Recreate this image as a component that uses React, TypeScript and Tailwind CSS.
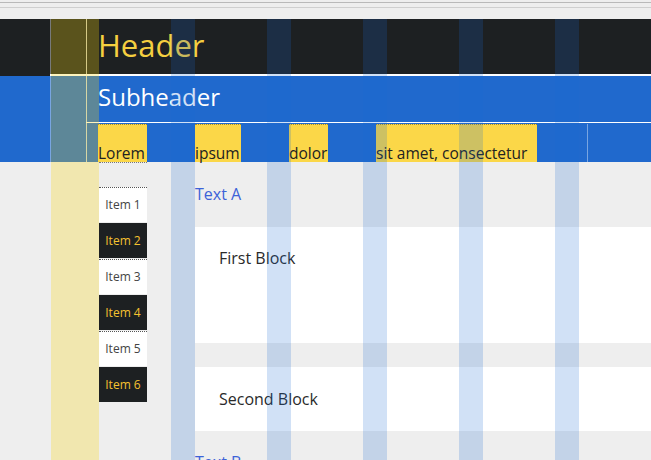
const items = ['Item 1', 'Item 2', 'Item 3', 'Item 4', 'Item 5', 'Item 6'];

const navLinks = [
  { label: 'Lorem', w: 'w-[49px]' },
  { label: 'ipsum', w: 'w-[46px]' },
  { label: 'dolor', w: 'w-[39px]' },
  { label: 'sit amet, consectetur', w: 'w-[161px]' },
];

const stripes = ['left-[171px]', 'left-[267px]', 'left-[363px]', 'left-[459px]', 'left-[555px]'];

export default function App() {
  return (
    <div className="relative w-[651px] h-[460px] overflow-hidden bg-[#eeeeee] font-['Open_Sans',sans-serif]">
      {/* browser chrome strip */}
      <div className="h-[19px]">
        <div className="pt-[2px]">
          <div className="border-t border-[#b9b9b9]" />
          <div className="mt-[4px] border-t border-[#cfcfcf]" />
        </div>
      </div>

      {/* Header */}
      <header className="h-[55px] bg-[#1d2022] pl-[98px] pt-[11px]">
        <h1 className="text-[31px] leading-[30px] font-normal text-[#f5cf40]">Header</h1>
      </header>
      <div className="flex h-[2px]">
        <div className="w-[50px] bg-[#1d2022]" />
        <div className="flex-1 bg-white" />
      </div>

      {/* Subheader */}
      <div className="h-[46px] bg-[#2069cd] pl-[98px] pt-[8px]">
        <h2 className="text-[24px] leading-[25px] font-normal text-white">Subheader</h2>
      </div>
      <div className="flex h-[2px] bg-[#2069cd]">
        <div className="w-[86px]" />
        <div className="flex-1 border-t border-white" />
      </div>

      {/* Nav */}
      <nav className="flex h-[38px] gap-[48px] bg-[#2069cd] pl-[98px]">
        {navLinks.map((l) => (
          <a
            key={l.label}
            className={`${l.w} flex items-end whitespace-nowrap border-t border-dotted border-[#a08a30] bg-[#fbd748] text-[15.5px] leading-[18px] text-[#222]`}
          >
            {l.label}
          </a>
        ))}
      </nav>

      {/* Content */}
      <div className="flex">
        <div className="w-[99px] shrink-0" />
        <aside className="w-[48px] shrink-0 border-t border-dotted border-[#777] pt-[24px]">
          {items.map((item, i) => (
            <div
              key={item}
              className={
                i % 2 === 0
                  ? 'mb-px flex h-[35px] items-center justify-center border-t border-dotted border-[#555] bg-white text-[12px] text-[#444]'
                  : 'mb-px flex h-[35px] items-center justify-center bg-[#1d2022] text-[12px] text-[#f5c230]'
              }
            >
              {item}
            </div>
          ))}
        </aside>
        <div className="w-[48px] shrink-0" />
        <main className="flex-1">
          <div className="h-[65px] pt-[20px] text-[16px] leading-[24px] text-[#3d62d8]">Text A</div>
          <div className="h-[116px] bg-white px-6 pt-[19px] text-[16px] leading-[24px] text-[#2a2a2a]">First Block</div>
          <div className="h-[24px]" />
          <div className="flex h-[64px] items-center bg-white px-6 text-[16px] leading-[24px] text-[#2a2a2a]">Second Block</div>
          <div className="pt-[19px] text-[16px] leading-[24px] text-[#3d62d8]">Text B</div>
        </main>
      </div>

      {/* grid overlay */}
      <div className="pointer-events-none absolute left-[51px] top-[19px] bottom-0 w-[48px] bg-[rgba(252,216,16,0.28)]" />
      {stripes.map((s) => (
        <div key={s} className={`pointer-events-none absolute ${s} top-[19px] bottom-0 w-[24px] bg-[rgba(24,104,210,0.2)]`} />
      ))}
      <div className="pointer-events-none absolute left-[50px] top-[19px] h-[143px] w-px bg-white/40" />
      <div className="pointer-events-none absolute left-[86px] top-[19px] h-[143px] w-px bg-[rgba(255,240,170,0.75)]" />
      <div className="pointer-events-none absolute left-[587px] top-[124px] h-[38px] w-px bg-white/40" />
    </div>
  );
}
